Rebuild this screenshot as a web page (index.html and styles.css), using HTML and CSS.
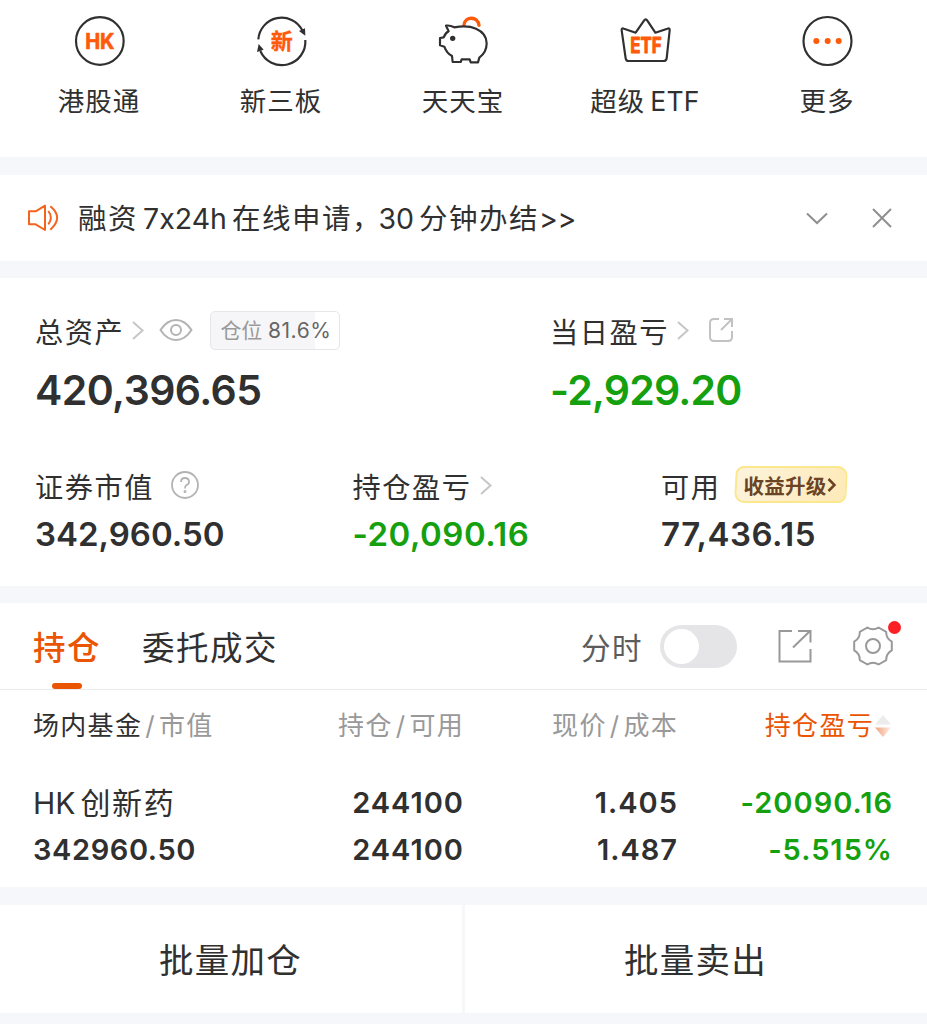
FILE: index.html
```html
<!DOCTYPE html>
<html lang="zh-CN">
<head>
<meta charset="utf-8">
<title>持仓</title>
<link rel="stylesheet" href="styles.css">
</head>
<body>
<main class="page">
  <nav class="shortcuts">
    <a class="shortcut">
      <svg class="shortcut-icon" viewBox="93 36 171 171"><circle cx="179.500" cy="123" r="71.500" class="ink"/><text x="179.500" y="147" class="mark hk" textLength="88" lengthAdjust="spacingAndGlyphs">HK</text></svg>
      <span>港股通</span>
    </a>
    <a class="shortcut">
      <svg class="shortcut-icon" viewBox="639 36 171 171"><path class="ink" d="M655 118A70 70 0 0 1 787 91M796 120A70.500 70.500 0 0 1 661 153"/><path class="ink-fill" d="M777 93L795 85L796 107ZM651 156L656 132L671 149Z"/><text x="725" y="146" class="mark xin">新</text></svg>
      <span>新三板</span>
    </a>
    <a class="shortcut">
      <svg class="shortcut-icon" viewBox="105 36 171 171"><path class="coin" d="M192 74C195 48 234 48 237 76"/><path class="ink" d="M138 77Q149 75 163 82C185 78 210 78 228 86C251 96 260 111 260 130C260 150 249 165 238 173L234 187H212L209 178H185L182 186H158L156 168Q140 160 133 140L120 136V114L131 112Q136 99 146 94Z"/><circle cx="158" cy="115" r="8" class="ink-fill"/></svg>
      <span>天天宝</span>
    </a>
    <a class="shortcut">
      <svg class="shortcut-icon" viewBox="651 36 171 171"><path class="ink" d="M665 91Q664 83 672 86L707 98L732 62Q737 54 742 62L766 98L802 86Q810 83 809 91L800 175Q799 183 790 183H686Q678 183 677 175Z"/><text x="738" y="159" class="mark etf" textLength="94" lengthAdjust="spacingAndGlyphs">ETF</text></svg>
      <span>超级<i class="thin"></i><span class="latin">ETF</span></span>
    </a>
    <a class="shortcut">
      <svg class="shortcut-icon" viewBox="117 36 171 171"><circle cx="202.500" cy="123" r="72" class="ink"/><g class="mark"><circle cx="169" cy="123" r="9"/><circle cx="203" cy="123" r="9"/><circle cx="236" cy="123" r="9"/></g></svg>
      <span>更多</span>
    </a>
  </nav>

  <section class="notice">
    <svg class="speaker" viewBox="81 156 96 96"><path d="M87 184H107L135 167V240L107 223H87ZM145 183Q160 203 145 223M151 169Q192 203 151 239"/></svg>
    <p class="notice-text">融资<i class="thin"></i><span class="latin">7x24h</span><i class="thin"></i>在线申请<span class="comma">，</span><span class="latin">30</span><i class="thin"></i>分钟办结<span class="arrows">&gt;&gt;</span></p>
    <svg class="notice-down" viewBox="0 0 24 13"><path d="M2 1.500L12 11L22 1.500"/></svg>
    <svg class="notice-close" viewBox="0 0 20 20"><path d="M1 1L19 19M19 1L1 19"/></svg>
  </section>

  <section class="assets">
    <div class="asset-row primary">
      <div class="asset">
        <div class="label">总资产
          <svg class="chevron" viewBox="0 0 12 19"><path d="M1 1L10.500 9.500L1 18"/></svg>
          <svg class="eye" viewBox="0 0 34 24"><path d="M1.500 12Q8 2 17 2T32.500 12Q26 22 17 22T1.500 12Z"/><circle cx="17" cy="12" r="5"/></svg>
          <span class="ratio"><em>仓位</em> 81.6%</span>
        </div>
        <div class="value">420,396.65</div>
      </div>
      <div class="asset">
        <div class="label">当日盈亏
          <svg class="chevron" viewBox="0 0 12 19"><path d="M1 1L10.500 9.500L1 18"/></svg>
          <svg class="open" viewBox="0 0 26 26"><path d="M11 2H6Q2 2 2 6V20Q2 24 6 24H20Q24 24 24 20V14M13 13L23.500 2.500M16 2H24V10"/></svg>
        </div>
        <div class="value down">-2,929.20</div>
      </div>
    </div>
    <div class="asset-row secondary">
      <div class="asset">
        <div class="label">证券市值
          <svg class="help" viewBox="0 0 28 28"><circle cx="14" cy="14" r="13"/><path d="M10 11Q10 7 14 7T18 11Q18 13 15.500 14Q14 15 14 17.500"/><circle cx="14" cy="20.500" r=".6"/></svg>
        </div>
        <div class="value">342,960.50</div>
      </div>
      <div class="asset">
        <div class="label">持仓盈亏
          <svg class="chevron" viewBox="0 0 12 19"><path d="M1 1L10.500 9.500L1 18"/></svg>
        </div>
        <div class="value spaced down">-20,090.16</div>
      </div>
      <div class="asset">
        <div class="label">可用
          <span class="upgrade">收益升级<svg viewBox="0 0 9 16"><path d="M1.500 2L7.500 8L1.500 14"/></svg></span>
        </div>
        <div class="value spaced">77,436.15</div>
      </div>
    </div>
  </section>

  <section class="holdings">
    <header class="tabs">
      <a class="tab active">持仓</a>
      <a class="tab">委托成交</a>
      <span class="minute">分时</span>
      <span class="switch"></span>
      <svg class="export" viewBox="0 0 34 34"><path d="M14 2H1.500V32.500H32.500V20M20 2H32.500V13.500M15 18.500L32 2"/></svg>
      <span class="settings">
        <svg viewBox="-20 -20 40 40"><path d="M18.800-4.300V4.300Q13 7.500 13.200 14.100L5.600 18.500Q0 15-5.600 18.500L-13.200 14.100Q-13 7.500-18.800 4.300V-4.300Q-13-7.500-13.200-14.100L-5.600-18.500Q0-15 5.600-18.500L13.200-14.100Q13-7.500 18.800-4.300Z"/><circle r="7"/></svg>
        <i class="dot"></i>
      </span>
    </header>
    <div class="grid head">
      <span><b>场内基金</b><i class="slash">/</i>市值</span>
      <span>持仓<i class="slash">/</i>可用</span>
      <span>现价<i class="slash">/</i>成本</span>
      <span class="sorted">持仓盈亏<svg class="sort" viewBox="0 0 18 24"><defs><linearGradient id="fade"><stop stop-color="#f2a07c"/><stop offset="1" stop-color="#fdeee6"/></linearGradient></defs><path d="M1 10.500L9 1L17 10.500Z" fill="#ececec"/><path d="M1 13.500H17L9 23Z" fill="url(#fade)"/></svg></span>
    </div>
    <div class="grid row first">
      <span class="name"><span class="latin">HK</span><i class="thin"></i>创新药</span><span>244100</span><span>1.405</span><span class="down">-20090.16</span>
    </div>
    <div class="grid row">
      <span>342960.50</span><span>244100</span><span>1.487</span><span class="down">-5.515%</span>
    </div>
  </section>

  <footer class="actions">
    <a class="action">批量加仓</a>
    <a class="action">批量卖出</a>
  </footer>
</main>
</body>
</html>
```
FILE: styles.css
```css
* { box-sizing: border-box; }
body {
  margin: 0;
  background: #f5f7fa;
  color: #303030;
  font-family: Inter, "Noto Sans CJK SC", sans-serif;
}
svg { display: block; flex: none; fill: none; overflow: visible; }
i, em { font-style: normal; }
.page { width: 927px; height: 1024px; overflow: hidden; display: flex; flex-direction: column; }
.thin { display: inline-block; width: 5px; }

/* shortcuts */
.shortcuts {
  display: grid;
  grid-template-columns: repeat(5, 182px);
  height: 157px;
  padding: 12px 8px 0;
  background: #fff;
}
.shortcut { display: flex; flex-direction: column; align-items: center; font-size: 26.500px; letter-spacing: 1px; line-height: 40px; white-space: nowrap; }
.shortcut > span { margin-top: 12px; }
.shortcut .latin { letter-spacing: .3px; }
.shortcut-icon { width: 57px; height: 57px; }
.ink { stroke: #303030; stroke-width: 6.500; stroke-linejoin: round; }
.ink-fill { fill: #303030; }
.coin { stroke: #ff5a0a; stroke-width: 10; stroke-linecap: round; }
.mark { fill: #ff5a0a; font-weight: 700; text-anchor: middle; letter-spacing: 0; }
.hk { font-size: 64px; stroke: #ff5a0a; stroke-width: 2; stroke-linejoin: round; }
.xin { font-size: 66px; stroke: #ff5a0a; stroke-width: 1; }
.etf { font-size: 65px; stroke: #ff5a0a; stroke-width: 3; stroke-linejoin: round; }

/* notice */
.notice { display: flex; align-items: center; height: 86px; margin-top: 18px; padding: 0 35px 0 27px; background: #fff; }
.speaker { width: 32px; height: 32px; stroke: #f4641e; stroke-width: 6; stroke-linejoin: round; }
.notice-text { flex: 1; margin: 2px 0 0 19px; font-size: 28.500px; letter-spacing: 1.500px; line-height: 40px; white-space: nowrap; }
.notice-text .latin { letter-spacing: 0; }
.notice-text .comma { letter-spacing: -2px; }
.arrows { letter-spacing: -.5px; }
.notice-down { width: 24px; height: 13px; stroke: #8f8f8f; stroke-width: 2; margin-right: 43px; }
.notice-close { width: 20px; height: 20px; stroke: #8f8f8f; stroke-width: 2; }

/* assets */
.assets { height: 308px; margin-top: 17px; padding: 32px 36px 0 35px; background: #fff; }
.asset-row { display: grid; }
.primary { grid-template-columns: 515px auto; }
.secondary { grid-template-columns: 317.500px 308.500px auto; margin-top: 50px; }
.label { display: flex; align-items: center; height: 40px; font-size: 28.200px; letter-spacing: 1.600px; white-space: nowrap; }
.value { font-weight: 600; white-space: nowrap; }
.primary .value { margin-top: 15px; font-size: 41px; line-height: 50px; letter-spacing: -.55px; }
.primary .down { letter-spacing: -.8px; }
.secondary .value { margin-top: 9px; font-size: 33px; line-height: 40px; letter-spacing: 0; }
.secondary .spaced { letter-spacing: .5px; }
.down { color: #14a00f; }
.chevron { width: 12px; height: 19px; margin-left: 8px; stroke: #c6c6c6; stroke-width: 2; }
.eye { width: 34px; height: 24px; margin-left: 15px; stroke: #b3b3b3; stroke-width: 2; }
.ratio {
  width: 130px; height: 39px; margin-left: 17px; padding-left: 9px;
  border: 1.500px solid #e6e6e8; border-radius: 5px;
  background: linear-gradient(90deg, #f6f6f8 81.600%, #fff 81.600%);
  color: #666; font-size: 21px; line-height: 38px; letter-spacing: .6px;
}
.ratio em { color: #9a9a9a; letter-spacing: 0; margin-right: -1px; }
.open { width: 26px; height: 26px; margin-left: 19px; stroke: #c2c2c2; stroke-width: 2; }
.help { width: 28px; height: 28px; margin-left: 17px; stroke: #b3b3b3; stroke-width: 1.800; }
.upgrade {
  position: relative; z-index: 0;
  display: flex; align-items: center; width: 112px; height: 37px; margin: -1px 0 0 14px; padding-left: 9px;
  color: #6b4426; font-size: 20.500px; font-weight: 700; letter-spacing: .2px;
}
.upgrade::before {
  content: ""; position: absolute; inset: 0; z-index: -1;
  border: 2px solid #fbe78c; border-radius: 8px 10px; transform: skewX(-3deg);
  background: linear-gradient(110deg, #fdf3dc, #feeab8);
}
.upgrade svg { width: 9px; height: 16px; margin-left: 1px; stroke: #6b4426; stroke-width: 2.500; }

/* holdings */
.holdings { height: 284px; margin-top: 17px; background: #fff; }
.tabs { display: flex; align-items: center; height: 87px; padding: 0 34px 0 33px; border-bottom: 1px solid #ececee; font-size: 32.500px; letter-spacing: 1.500px; }
.tab { position: relative; margin: 5px 41px 0 0; line-height: 40px; white-space: nowrap; }
.tab:nth-child(2) { margin-right: auto; }
.active { color: #ea5504; font-weight: 500; }
.active::after { content: ""; position: absolute; left: 19px; top: 54px; width: 30px; height: 6px; border-radius: 3px; background: #ea5504; }
.minute { color: #5c5c5c; font-size: 29.500px; }
.switch { display: flex; align-items: center; width: 77px; height: 43px; margin-left: 17px; padding-left: 4px; border-radius: 22px; background: #e5e5e7; }
.switch::after { content: ""; width: 35px; height: 35px; border-radius: 50%; background: #fff; }
.export { width: 34px; height: 34px; margin-left: 41px; stroke: #999; stroke-width: 2; }
.settings { position: relative; margin-left: 41px; }
.settings svg { width: 40px; height: 40px; stroke: #999; stroke-width: 2; stroke-linejoin: round; }
.dot { position: absolute; left: 35px; top: -5px; width: 13px; height: 13px; border-radius: 50%; background: #fb1f26; }
.grid { display: grid; grid-template-columns: 250px 180px 214px 215px; padding-left: 33px; line-height: 40px; white-space: nowrap; }
.grid > span + span { text-align: right; }
.head { margin-top: 16px; color: #999; font-size: 26px; letter-spacing: 1.300px; }
.head > span + span:not(.sorted) { margin-right: -1px; }
.head b { color: #303030; font-weight: 400; }
.slash { margin: 0 3px; }
.head .sorted { display: flex; justify-content: flex-end; align-items: center; color: #ea5504; }
.sort { width: 18px; height: 24px; }
.row { margin-top: 7px; font-size: 29px; font-weight: 600; letter-spacing: .6px; }
.row > span + span { margin-right: -1px; letter-spacing: 1px; }
.row.first { margin-top: 37px; }
.row .name { font-size: 30px; font-weight: 400; letter-spacing: 1.600px; }
.row .name .latin { letter-spacing: 0; }

/* actions */
.actions { display: grid; grid-template-columns: 462px 462px; gap: 3px; height: 108px; margin-top: 18px; }
.action { display: flex; align-items: center; justify-content: center; padding: 0 1px 2px 0; background: #fff; font-size: 34.500px; letter-spacing: 1.300px; }
```
